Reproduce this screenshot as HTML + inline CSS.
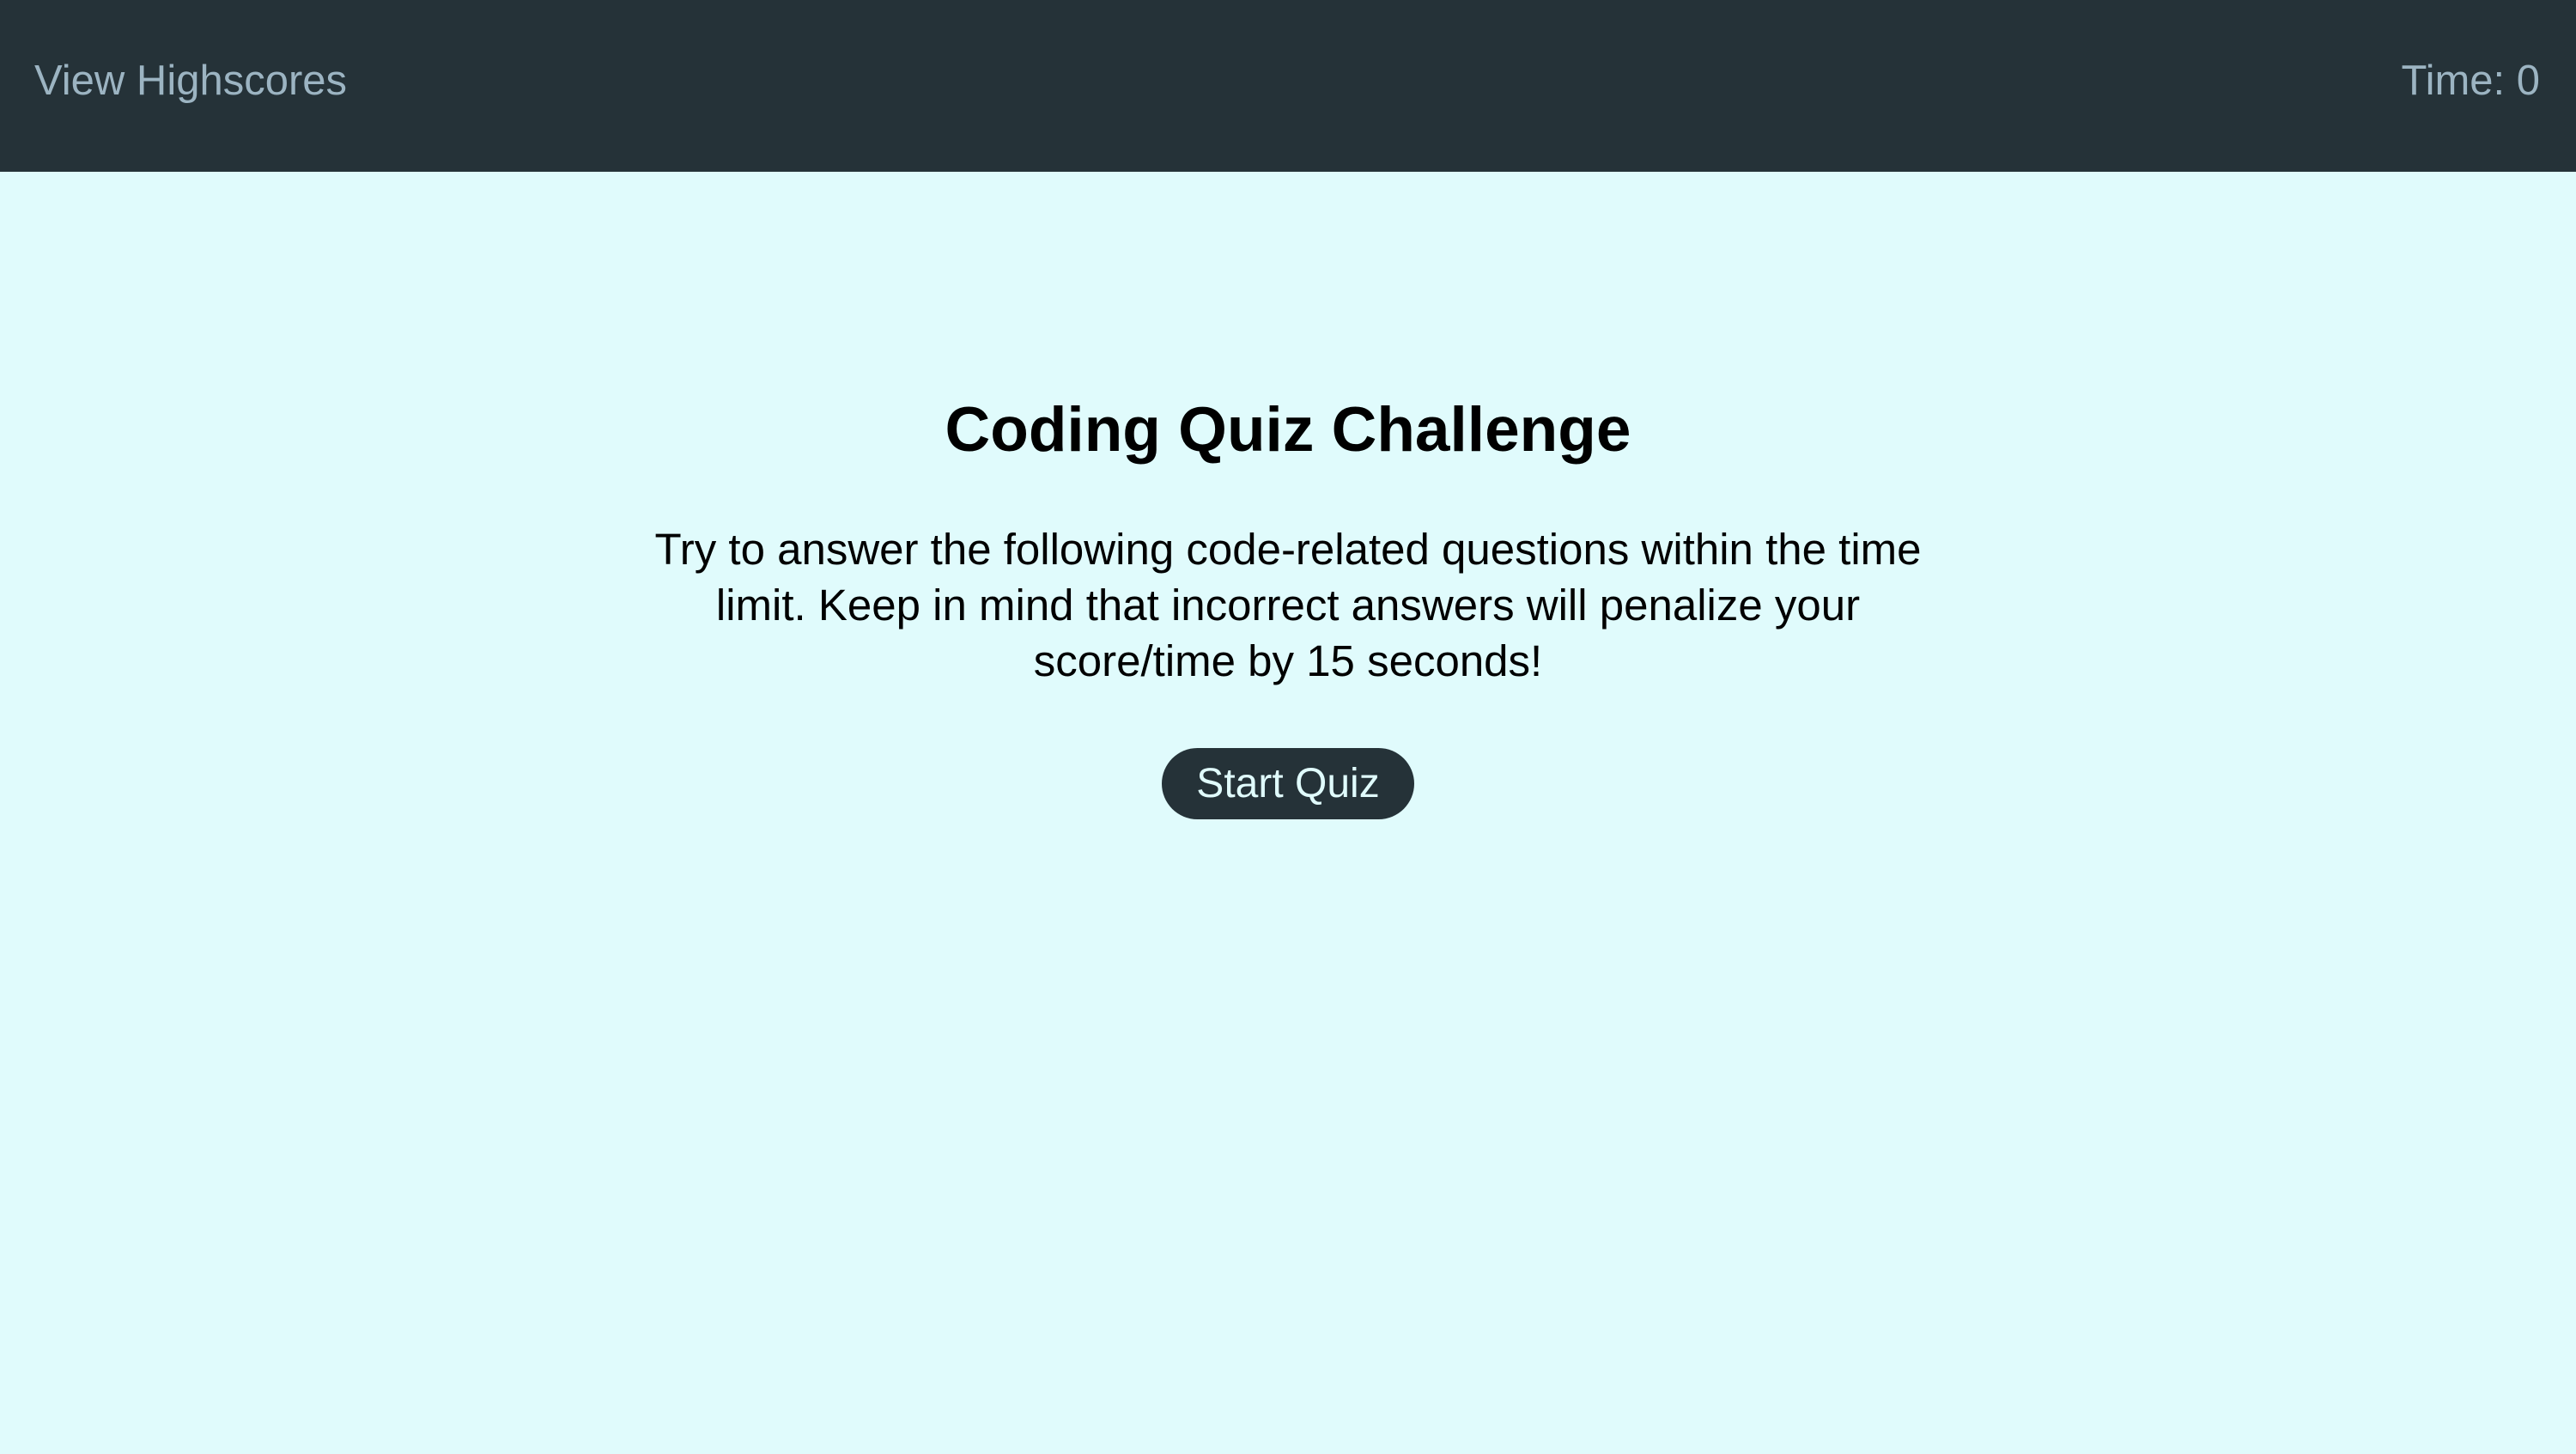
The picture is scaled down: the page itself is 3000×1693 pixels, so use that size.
<!DOCTYPE html>
<html><head><meta charset="utf-8"><style>
html,body{margin:0;padding:0;}
body{width:3000px;height:1693px;background:#e0fbfc;font-family:"Liberation Sans",sans-serif;overflow:hidden;position:relative;}
header{position:absolute;left:0;top:0;width:3000px;height:200px;background:#253238;}
.hs{position:absolute;left:40px;top:64px;font-size:49px;color:#9cb4c2;line-height:60px;}
.tm{position:absolute;right:42px;top:64px;font-size:49px;color:#9cb4c2;line-height:60px;}
h1{position:absolute;left:0;width:3000px;top:458px;margin:0;text-align:center;font-size:73px;font-weight:bold;line-height:86px;color:#000;}
p{position:absolute;left:0;width:3000px;top:607px;margin:0;text-align:center;font-size:51px;line-height:65px;color:#000;}
.btn{position:absolute;left:1353px;top:871px;width:294px;height:83px;border-radius:42px;background:#253238;color:#e0fbfc;font-size:48px;line-height:83px;text-align:center;}
</style></head><body>
<header><div class="hs">View Highscores</div><div class="tm">Time: 0</div></header>
<h1>Coding Quiz Challenge</h1>
<p>Try to answer the following code-related questions within the time<br>limit. Keep in mind that incorrect answers will penalize your<br>score/time by 15 seconds!</p>
<div class="btn">Start Quiz</div>
</body></html>
